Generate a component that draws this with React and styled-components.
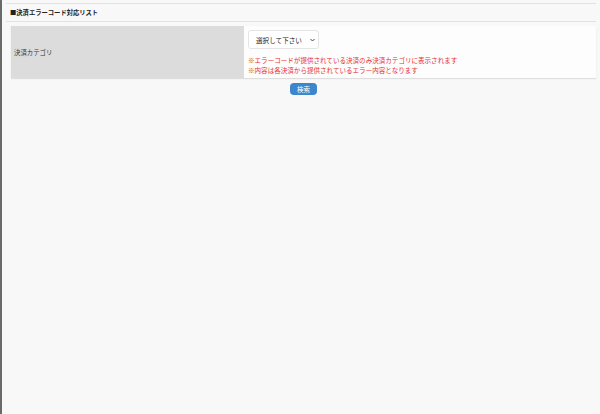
import React from 'react';
import styled, { createGlobalStyle } from 'styled-components';

const GlobalStyle = createGlobalStyle`
    html, body {
        margin: 0;
        padding: 0;
        background: #f8f8f8;
    }
    body {
        font-family: "Noto Sans CJK JP", "Noto Sans", sans-serif;
    }
`;

const Page = styled.div`
    min-height: 414px;
    box-sizing: border-box;
    border-left: 2px solid #6a6a6a;
    padding: 3px 4px 0 4px;
`;

const Header = styled.div`
    border-top: 1px solid #e2e2e2;
    border-bottom: 1px solid #e2e2e2;
    height: 17px;
    display: flex;
    align-items: center;
    padding: 0 4px;
    font-size: 6.3px;
    font-weight: 700;
    color: #222;
`;

const Table = styled.div`
    display: grid;
    grid-template-columns: 233px 1fr;
    margin: 4px 0 0 5px;
    box-shadow: 0 1px 1px rgba(0, 0, 0, 0.1);
`;

const LabelCell = styled.div`
    background: #dcdcdc;
    display: flex;
    align-items: center;
    padding: 0 3px;
    height: 52px;
    font-size: 6.4px;
    color: #333;
`;

const ValueCell = styled.div`
    background: #fdfdfd;
    padding: 4px 4px 0 4px;
`;

const SelectBox = styled.div`
    width: 71px;
    height: 19px;
    box-sizing: border-box;
    background: #fff;
    border: 1px solid #e4e4e4;
    border-radius: 3px;
    display: flex;
    align-items: center;
    justify-content: space-between;
    padding: 0 3px 0 7px;
    font-size: 6.6px;
    color: #222;
`;

const Note = styled.div`
    color: #e8302c;
    font-size: 6.55px;
    line-height: 10px;
    margin-top: ${props => props.first ? '6px' : '0'};
`;

const ButtonRow = styled.div`
    display: flex;
    justify-content: center;
    padding-top: 5px;
    padding-left: 5px;
`;

const SearchButton = styled.button`
    width: 27px;
    height: 12px;
    padding: 0;
    border: none;
    border-radius: 4px;
    background: #3d86cc;
    color: #fff;
    font-family: inherit;
    font-size: 6.5px;
    line-height: 12px;
`;

const Chevron = () => (
    <svg width="5" height="4" viewBox="0 0 10 6">
        <path d="M1 1l4 4 4-4" fill="none" stroke="#333" strokeWidth="1.8" />
    </svg>
);

export default function App() {
    return (
        <>
            <GlobalStyle />
            <Page>
                <Header>■決済エラーコード対応リスト</Header>
                <Table>
                    <LabelCell>決済カテゴリ</LabelCell>
                    <ValueCell>
                        <SelectBox>
                            <span>選択して下さい</span>
                            <Chevron />
                        </SelectBox>
                        <Note first>※エラーコードが提供されている決済のみ決済カテゴリに表示されます</Note>
                        <Note>※内容は各決済から提供されているエラー内容となります</Note>
                    </ValueCell>
                </Table>
                <ButtonRow>
                    <SearchButton>検索</SearchButton>
                </ButtonRow>
            </Page>
        </>
    );
}
